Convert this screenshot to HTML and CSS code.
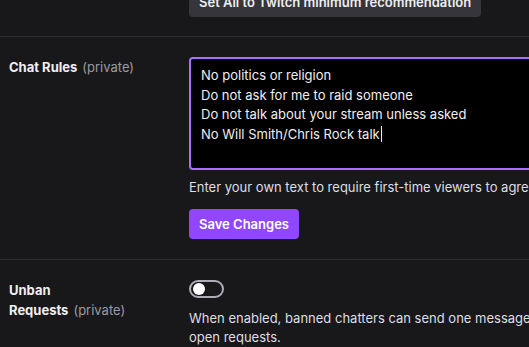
FILE: index.html
```html
<!DOCTYPE html>
<html lang="en">
<head>
  <meta charset="UTF-8" />
  <title>Moderation settings</title>
  <link rel="stylesheet" href="styles.css">
</head>
<body>
  <div class="page">

    <section class="row row-first">
      <div class="label"></div>
      <div class="field">
        <button class="btn btn-secondary" type="button">Set All to Twitch minimum recommendation</button>
      </div>
    </section>

    <section class="row">
      <div class="label">
        <span class="label-title">Chat Rules</span><span class="private">(private)</span>
      </div>
      <div class="field">
        <div class="textarea">
          <div class="line">No politics or religion</div>
          <div class="line">Do not ask for me to raid someone</div>
          <div class="line">Do not talk about your stream unless asked</div>
          <div class="line">No Will Smith/Chris Rock talk<span class="caret"></span></div>
        </div>
        <p class="hint">Enter your own text to require first-time viewers to agree to your chat rules before they can chat.</p>
        <button class="btn btn-primary" type="button">Save Changes</button>
      </div>
    </section>

    <section class="row">
      <div class="label">
        <span class="label-title">Unban Requests</span><span class="private">(private)</span>
      </div>
      <div class="field">
        <label class="toggle">
          <span class="knob"></span>
        </label>
        <p class="hint desc">When enabled, banned chatters can send one message to request to be unbanned. Go to Unban Requests in Mod View to review open requests.</p>
      </div>
    </section>

  </div>
</body>
</html>
```

FILE: styles.css
```css
html, body {
  margin: 0;
  overflow: hidden;
  background: #18181b;
}

body {
  font-family: Inter, "Noto Sans", sans-serif;
  font-size: 13px;
  line-height: 20px;
  color: #efeff1;
}

.page {
  margin-top: -33px;
  width: 1000px;
}

.row {
  display: flex;
  padding: 20px 0 20px 9px;
  border-bottom: 1px solid #2c2c31;
}

.row-first {
  padding-bottom: 19px;
}

.label {
  flex: 0 0 140px;
  padding-right: 40px;
}

.label-title {
  font-weight: 700;
}

.private {
  margin-left: 5px;
  color: #9a9aa4;
}

.field {
  width: 795px;
}

.btn {
  display: inline-flex;
  align-items: center;
  height: 30px;
  padding: 0 10px;
  border: none;
  border-radius: 4px;
  font-family: inherit;
  font-size: 13px;
  font-weight: 600;
  color: #efeff1;
  cursor: pointer;
}

.btn-secondary {
  background: #35353b;
}

.btn-primary {
  margin-top: 11px;
  background: #9147ff;
  color: #fff;
}

.textarea {
  box-sizing: border-box;
  height: 113px;
  padding: 7px 10px;
  border: 2px solid #a970ff;
  border-radius: 4px;
  background: #000;
  overflow: hidden;
  line-height: 19.5px;
}

.caret {
  display: inline-block;
  width: 1px;
  height: 16px;
  margin-left: 1px;
  vertical-align: -3px;
  background: #efeff1;
}

.hint {
  margin: 8px 0 0;
  line-height: 19.5px;
  color: #dedee3;
}

.toggle {
  display: block;
  box-sizing: border-box;
  width: 35px;
  height: 18px;
  padding: 1px 2px;
  border: 2px solid #adadb8;
  border-radius: 9px;
}

.knob {
  display: block;
  width: 12px;
  height: 12px;
  border-radius: 50%;
  background: #fff;
}

.desc {
  margin-top: 11px;
}
```
